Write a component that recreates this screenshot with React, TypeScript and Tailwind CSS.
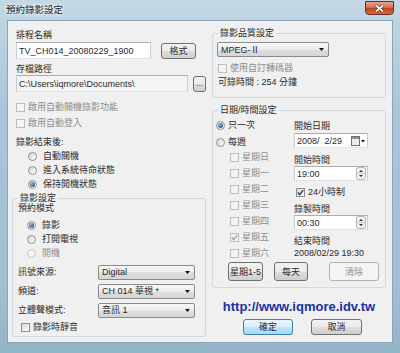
import React from "react";

const DIS = "text-[#8d8d8d]";

/* ---------------- SMALL CONTROLS ---------------- */
function CheckMark({ color }: { color: string }) {
  return (
    <svg width="7" height="7" viewBox="0 0 7 7">
      <path d="M0.8 3.6 L2.7 5.6 L6.3 1.1" stroke={color} strokeWidth="1.4" fill="none" />
    </svg>
  );
}

function Check({
  label,
  checked = false,
  disabled = false,
  className = "",
}: {
  label: string;
  checked?: boolean;
  disabled?: boolean;
  className?: string;
}) {
  return (
    <div className={`flex items-center ${className}`}>
      <span
        className={`w-[9px] h-[9px] border flex items-center justify-center ${
          disabled
            ? "border-[#bdbdbd] bg-[#f4f4f4]"
            : "border-[#8e8f8f] bg-[linear-gradient(135deg,#d3d6da,#ffffff)]"
        }`}
      >
        {checked && <CheckMark color={disabled ? "#a5a5a5" : "#2a3f66"} />}
      </span>
      <span className={`ml-[3px] ${disabled ? DIS : ""}`}>{label}</span>
    </div>
  );
}

function Radio({
  label,
  checked = false,
  disabled = false,
  wide = false,
  className = "",
}: {
  label: string;
  checked?: boolean;
  disabled?: boolean;
  wide?: boolean;
  className?: string;
}) {
  return (
    <div className={`flex items-center ${className}`}>
      <span
        className={`w-[9px] h-[9px] rounded-full border flex items-center justify-center ${
          disabled
            ? "border-[#c6c6c6] bg-[#f4f4f4]"
            : "border-[#8e8f8f] bg-[linear-gradient(135deg,#cfd2d6,#ffffff)]"
        }`}
      >
        {checked && (
          <span className="w-[5px] h-[5px] rounded-full bg-[radial-gradient(circle_at_35%_35%,#86b4e2,#1b3963)]" />
        )}
      </span>
      <span className={`${wide ? "ml-[6px]" : "ml-[3px]"} ${disabled ? DIS : ""}`}>{label}</span>
    </div>
  );
}

function TextBox({ children, className = "" }: { children?: React.ReactNode; className?: string }) {
  return (
    <div
      className={`border border-[#abadb3] border-b-[#dfe3e8] border-x-[#c9ccd1] flex items-center pl-[2px] ${className}`}
    >
      {children}
    </div>
  );
}

function Arrow() {
  return (
    <svg width="5" height="3" viewBox="0 0 5 3">
      <path d="M0 0 H5 L2.5 3 Z" fill="#111" />
    </svg>
  );
}

function Combo({ children, className = "" }: { children: React.ReactNode; className?: string }) {
  return (
    <div
      className={`border border-[#8a8a8a] rounded-[2px] bg-[linear-gradient(#f7f7f7,#ececec_50%,#dedede_50%,#d6d6d6)] flex items-center justify-between pl-[3px] pr-[4px] ${className}`}
    >
      <span>{children}</span>
      <Arrow />
    </div>
  );
}

function Btn({
  children,
  kind = "normal",
  className = "",
}: {
  children: React.ReactNode;
  kind?: "normal" | "default" | "disabled";
  className?: string;
}) {
  const look =
    kind === "default"
      ? "border-[#3c7fb1] bg-[linear-gradient(#eaf6fd,#d9f0fc_50%,#bee6fd_50%,#a7d9f5)]"
      : kind === "disabled"
      ? "border-[#adb2b5] bg-[#f4f4f4] text-[#8f8f8f]"
      : "border-[#707070] bg-[linear-gradient(#f2f2f2,#ebebeb_50%,#dddddd_50%,#cfcfcf)]";
  return (
    <div className={`border rounded-[3px] flex items-center justify-center ${look} ${className}`}>
      {children}
    </div>
  );
}

function Spin() {
  return (
    <svg width="10" height="13" viewBox="0 0 10 13">
      <rect x="0.5" y="0.5" width="9" height="12" rx="2" fill="#f1f1f1" stroke="#b5b5b5" />
      <line x1="1" y1="6.5" x2="9" y2="6.5" stroke="#c8c8c8" />
      <path d="M3 5 L5 3 L7 5 Z" fill="#333" />
      <path d="M3 8 L5 10 L7 8 Z" fill="#333" />
    </svg>
  );
}

function SpinBox({ children, className = "" }: { children: React.ReactNode; className?: string }) {
  return (
    <TextBox className={`bg-white justify-between pr-[1px] ${className}`}>
      <span>{children}</span>
      <Spin />
    </TextBox>
  );
}

function Calendar() {
  return (
    <svg width="14" height="10" viewBox="0 0 14 10">
      <rect x="0.5" y="0.5" width="8" height="9" fill="#e9ecef" stroke="#6b7079" />
      <rect x="1" y="1" width="7" height="2" fill="#8b9099" />
      <path d="M10 4 H14 L12 6.5 Z" fill="#111" />
    </svg>
  );
}

function Group({
  title,
  children,
  className = "",
}: {
  title: string;
  children: React.ReactNode;
  className?: string;
}) {
  return (
    <fieldset className={`border border-[#d0d9df] rounded-[3px] px-0 ${className}`}>
      <legend className="ml-[5px] px-[2px] h-[10px] leading-[10px]">{title}</legend>
      {children}
    </fieldset>
  );
}

/* ---------------- DIALOG ---------------- */
export default function App() {
  return (
    <div className="w-[400px] h-[353px] overflow-hidden font-['Liberation_Sans','Noto_Sans_CJK_TC',sans-serif] text-[9px] leading-[12px] text-[#2a2a2a] bg-[linear-gradient(180deg,#c3d8e5,#a9c6d8_30%,#a2c0d3_80%,#93b3c7)]">
      {/* TITLE BAR */}
      <div className="h-[20px] flex items-start">
        <div className="ml-[6px] mt-[4px] h-[12px] leading-[12px] text-[9.5px] text-[#222] [text-shadow:0_0_5px_#ffffff,0_0_3px_#ffffff]">
          預約錄影設定
        </div>
        <div className="ml-auto mr-[6px] mt-[1px] w-[29px] h-[14px] rounded-b-[4px] border border-[#6a2a1c] bg-[linear-gradient(#e9a48f,#d66f52_45%,#c4421f_55%,#d7683f)] flex items-center justify-center">
          <svg width="11" height="9" viewBox="0 0 11 9">
            <path d="M2 1.5 L9 7.5 M9 1.5 L2 7.5" stroke="#5a2a20" strokeWidth="3" />
            <path d="M2 1.5 L9 7.5 M9 1.5 L2 7.5" stroke="#ffffff" strokeWidth="1.7" />
          </svg>
        </div>
      </div>

      {/* CLIENT */}
      <div className="mx-[7px] h-[323px] border border-[#8ea4b3] bg-[#f0f0f0] flex">
        {/* LEFT COLUMN */}
        <div className="ml-[4px] w-[194px] flex flex-col">
          <div className="pl-[4px] flex flex-col">
            <div className="mt-[8px] h-[12px] flex items-center">排程名稱</div>
            <div className="mt-[1px] h-[17px] flex items-center">
              <TextBox className="w-[135px] h-[17px] bg-white">TV_CH014_20080229_1900</TextBox>
              <Btn className="ml-[10px] w-[35px] h-[16px]">格式</Btn>
            </div>
            <div className="mt-[4px] h-[12px] flex items-center">存檔路徑</div>
            <div className="h-[17px] flex items-center">
              <TextBox className="w-[172px] h-[17px] bg-[#f4f4f4]">{"C:\\Users\\iqmore\\Documents\\"}</TextBox>
              <Btn className="ml-[5px] w-[13px] h-[16px] text-[8px]">...</Btn>
            </div>
            <Check className="mt-[7px] h-[16px]" disabled label="啟用自動關機錄影功能" />
            <Check className="h-[16px]" disabled label="啟用自動登入" />
            <div className="mt-[4px] h-[14px] flex items-center">錄影結束後:</div>
            <div className="pl-[12px] flex flex-col">
              <Radio className="h-[14px]" wide label="自動關機" />
              <Radio className="h-[14px]" wide label="進入系統待命狀態" />
              <Radio className="h-[14px]" wide checked label="保持開機狀態" />
            </div>
          </div>

          <Group title="錄影設定" className="mt-[2px] pb-[2px]">
            <div className="pl-[5px] h-[10px] flex items-center">預約模式</div>
            <div className="pl-[14px] mt-[5px] flex flex-col">
              <Radio className="h-[14px]" wide checked label="錄影" />
              <Radio className="h-[14px]" wide label="打開電視" />
              <Radio className="h-[14px]" wide disabled label="開機" />
            </div>
            <div className="pl-[5px] mt-[4px] h-[16px] flex items-center">
              <span className="w-[80px]">訊號來源:</span>
              <Combo className="w-[97px] h-[15px]">Digital</Combo>
            </div>
            <div className="pl-[5px] mt-[3px] h-[16px] flex items-center">
              <span className="w-[80px]">頻道:</span>
              <Combo className="w-[97px] h-[15px]">CH 014 華視 *</Combo>
            </div>
            <div className="pl-[5px] mt-[3px] h-[16px] flex items-center">
              <span className="w-[80px]">立體聲模式:</span>
              <Combo className="w-[97px] h-[15px]">音訊 1</Combo>
            </div>
            <Check className="pl-[8px] mt-[2px] h-[14px]" label="錄影時靜音" />
          </Group>
        </div>

        {/* RIGHT COLUMN */}
        <div className="ml-[6px] w-[174px] flex flex-col">
          <Group title="錄影品質設定" className="mt-[7px] pb-[8px]">
            <Combo className="mt-[4px] ml-[4px] w-[112px] h-[15px]">MPEG-Ⅱ</Combo>
            <Check className="mt-[4px] ml-[5px] h-[14px]" disabled label="使用自訂轉碼器" />
            <div className="ml-[5px] h-[14px] flex items-center">可錄時間 : 254 分鐘</div>
          </Group>

          <Group title="日期/時間設定" className="mt-[7px] pb-[6px]">
            <div className="flex">
              <div className="pl-[3px] w-[81px] flex flex-col">
                <Radio className="mt-[3px] h-[14px]" checked label="只一次" />
                <Radio className="mt-[3px] h-[14px]" label="每週" />
                <div className="pl-[14px] flex flex-col">
                  <Check className="h-[16px]" disabled label="星期日" />
                  <Check className="h-[16px]" disabled label="星期一" />
                  <Check className="h-[16px]" disabled label="星期二" />
                  <Check className="h-[16px]" disabled label="星期三" />
                  <Check className="h-[16px]" disabled label="星期四" />
                  <Check className="h-[16px]" disabled checked label="星期五" />
                  <Check className="h-[16px]" disabled label="星期六" />
                </div>
              </div>
              <div className="flex flex-col">
                <div className="mt-[5px] h-[12px] flex items-center">開始日期</div>
                <TextBox className="mt-[1px] w-[74px] h-[15px] bg-white justify-between pr-[2px]">
                  <span>2008/&nbsp;&nbsp;2/29</span>
                  <Calendar />
                </TextBox>
                <div className="mt-[6px] h-[12px] flex items-center">開始時間</div>
                <SpinBox className="w-[74px] h-[15px]">19:00</SpinBox>
                <Check className="mt-[4px] ml-[2px] h-[14px]" checked label="24小時制" />
                <div className="mt-[4px] h-[12px] flex items-center">錄製時間</div>
                <SpinBox className="w-[74px] h-[15px]">00:30</SpinBox>
                <div className="mt-[5px] h-[12px] flex items-center">結束時間</div>
                <div className="h-[12px] flex items-center">2008/02/29 19:30</div>
              </div>
            </div>
            <div className="mt-[1px] h-[19px] flex">
              <Btn className="ml-[15px] w-[35px]">星期1-5</Btn>
              <Btn className="ml-[11px] w-[34px]">每天</Btn>
              <Btn className="ml-[21px] w-[50px]" kind="disabled">清除</Btn>
            </div>
          </Group>

          <div className="mt-[9px] h-[20px] flex items-center justify-center text-[13px] font-bold text-[#1c2fa3]">
            http://www.iqmore.idv.tw
          </div>
          <div className="mt-[2px] h-[16px] flex">
            <Btn className="ml-[31px] w-[50px]" kind="default">確定</Btn>
            <Btn className="ml-[18px] w-[51px]">取消</Btn>
          </div>
        </div>
      </div>
    </div>
  );
}
